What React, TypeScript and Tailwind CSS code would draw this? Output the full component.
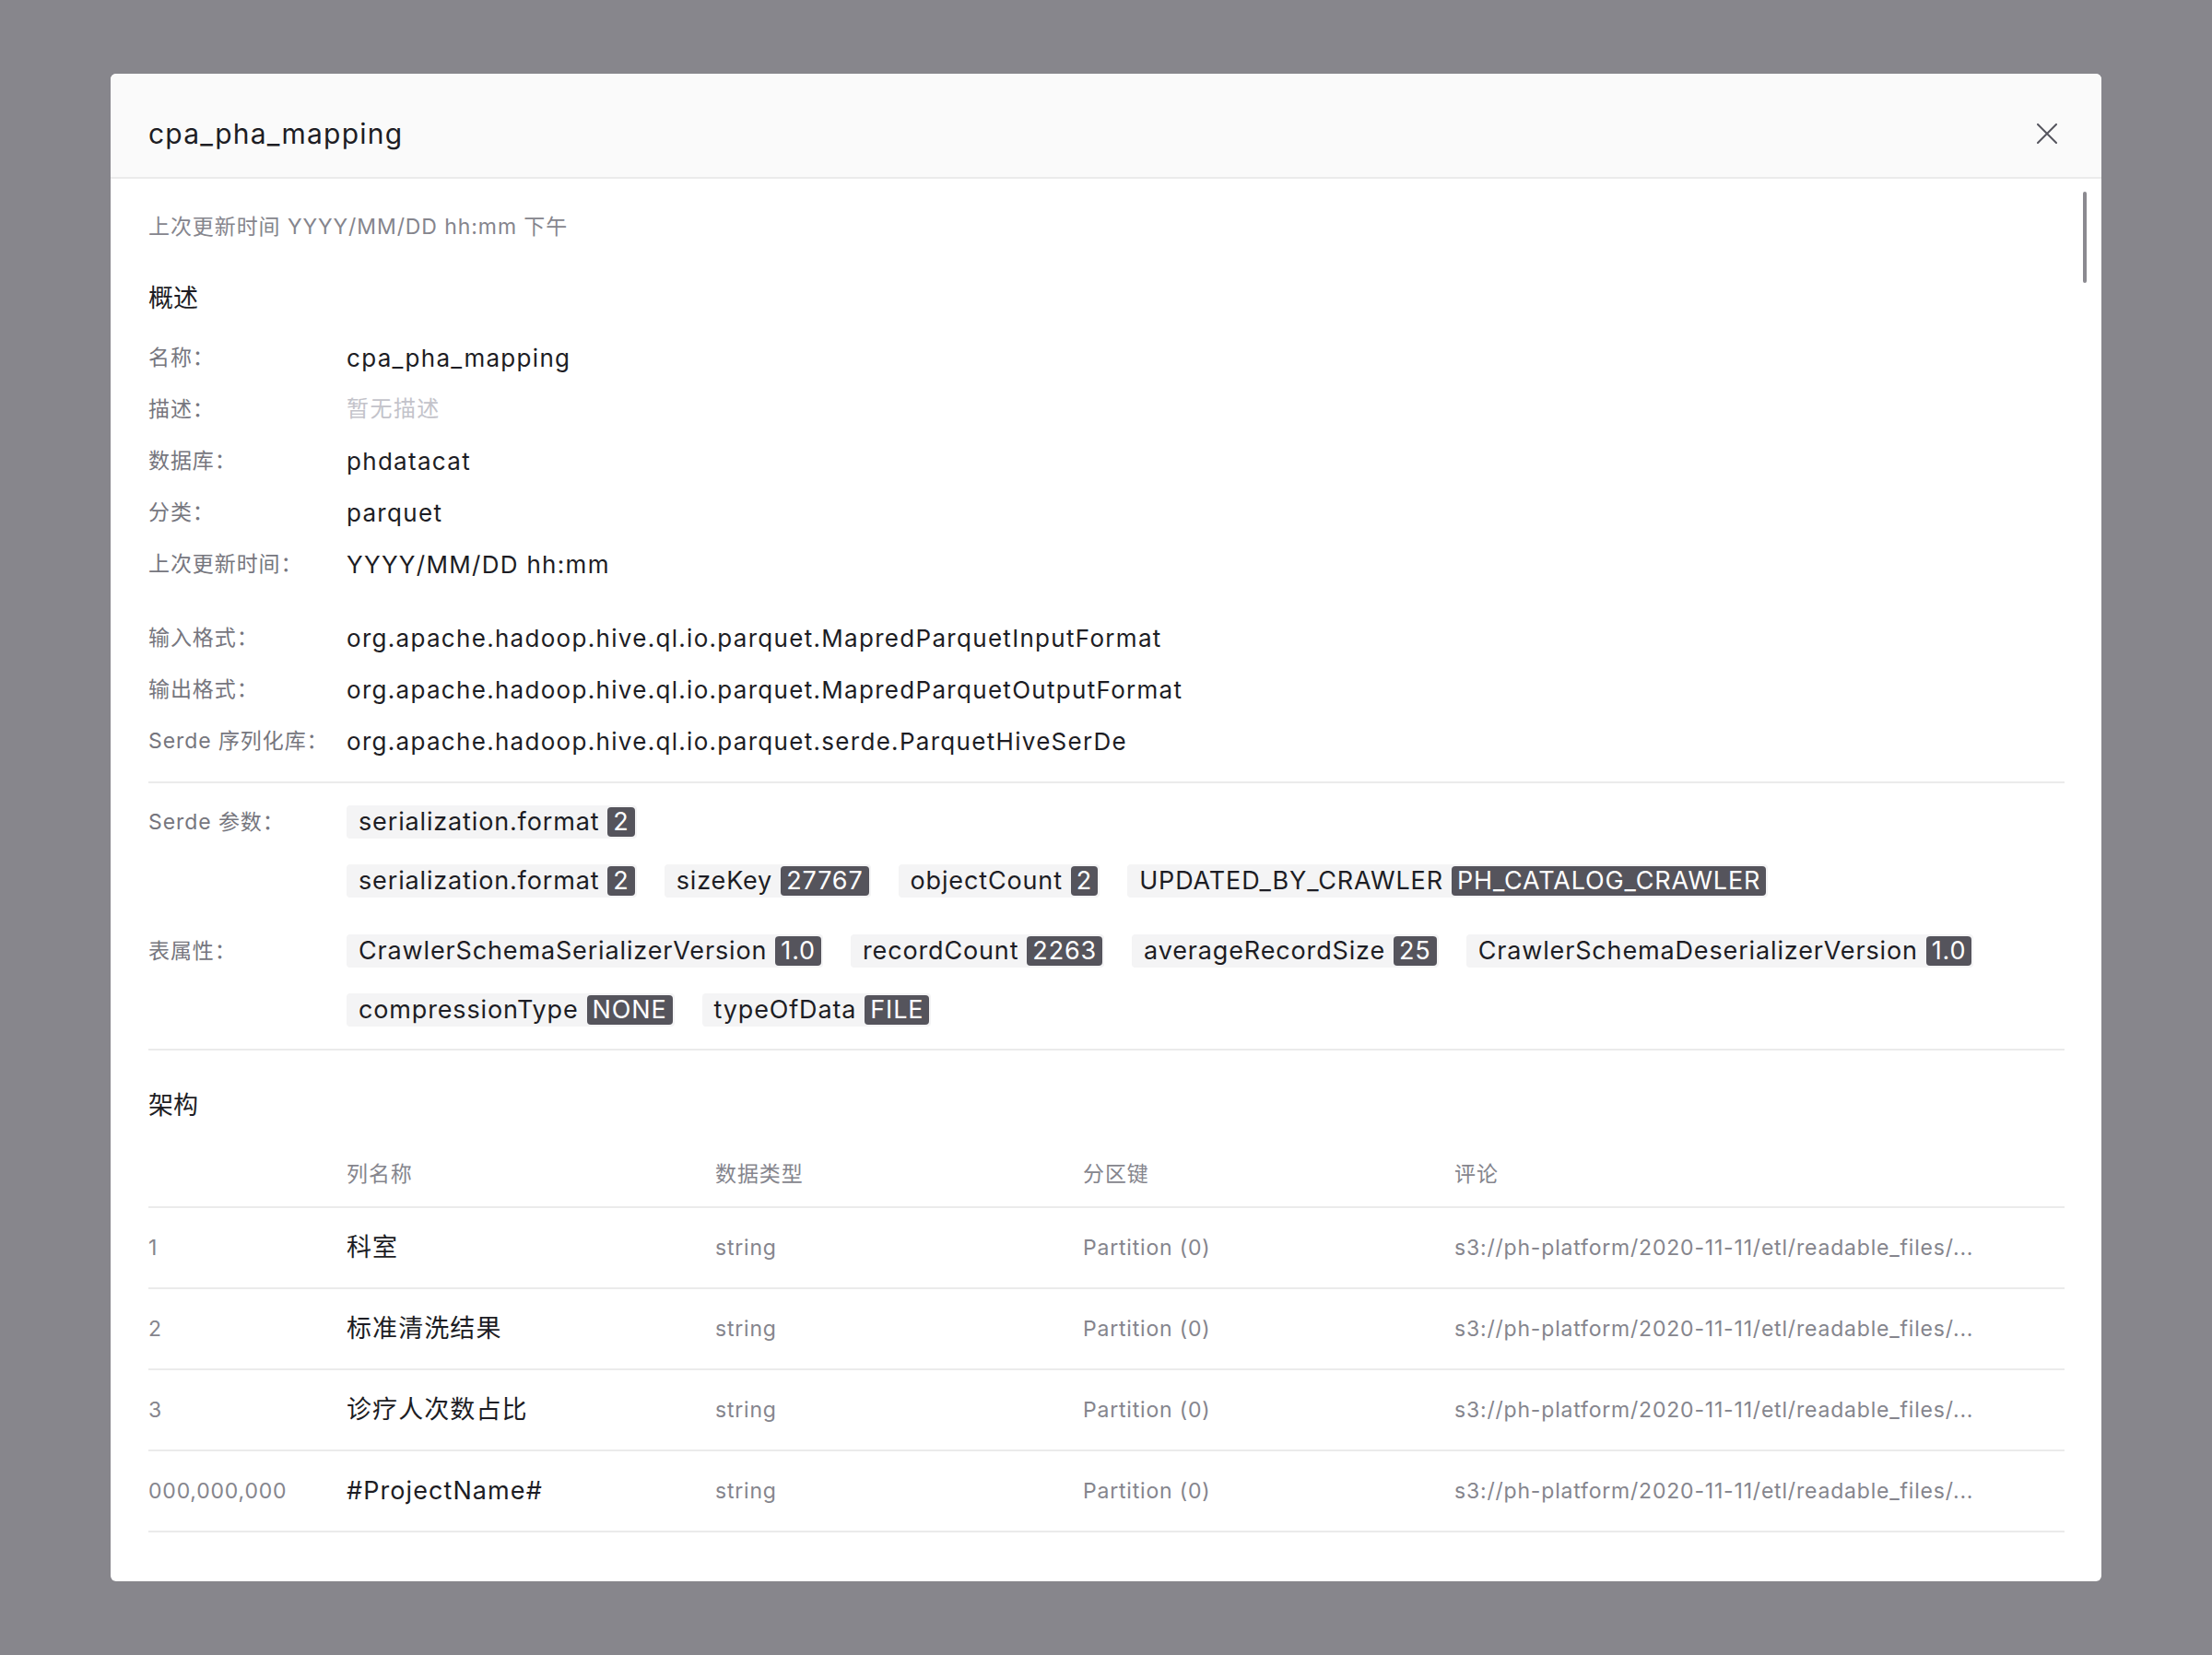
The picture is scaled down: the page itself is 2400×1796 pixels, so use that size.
import React from 'react';

type Row = { label: string; value: string; muted?: boolean };

const overview: Row[] = [
    { label: '名称：', value: 'cpa_pha_mapping' },
    { label: '描述：', value: '暂无描述', muted: true },
    { label: '数据库：', value: 'phdatacat' },
    { label: '分类：', value: 'parquet' },
    { label: '上次更新时间：', value: 'YYYY/MM/DD hh:mm' },
];

const formats: Row[] = [
    { label: '输入格式：', value: 'org.apache.hadoop.hive.ql.io.parquet.MapredParquetInputFormat' },
    { label: '输出格式：', value: 'org.apache.hadoop.hive.ql.io.parquet.MapredParquetOutputFormat' },
    { label: 'Serde 序列化库：', value: 'org.apache.hadoop.hive.ql.io.parquet.serde.ParquetHiveSerDe' },
];

const serdeParams: [string, string][] = [
    ['serialization.format', '2'],
    ['sizeKey', '27767'],
    ['objectCount', '2'],
    ['UPDATED_BY_CRAWLER', 'PH_CATALOG_CRAWLER'],
];

const tableProps: [string, string][] = [
    ['CrawlerSchemaSerializerVersion', '1.0'],
    ['recordCount', '2263'],
    ['averageRecordSize', '25'],
    ['CrawlerSchemaDeserializerVersion', '1.0'],
    ['compressionType', 'NONE'],
    ['typeOfData', 'FILE'],
];

const columns = [
    { idx: '1', name: '科室' },
    { idx: '2', name: '标准清洗结果' },
    { idx: '3', name: '诊疗人次数占比' },
    { idx: '000,000,000', name: '#ProjectName#' },
];

function Tag({ name, value }: { name: string; value: string }) {
    return (
        <span className="inline-flex items-center h-[36px] bg-[#f4f4f5] rounded-[4px] pl-[13px] pr-[2px] text-[27px] tracking-[0.85px] text-[#1d1d24]">
            {name}
            <span className="ml-[9px] h-[32px] px-[6px] rounded-[4px] bg-[#55545c] text-white flex items-center">
                {value}
            </span>
        </span>
    );
}

function InfoRow({ row }: { row: Row }) {
    return (
        <div className="flex items-center h-[56px]">
            <div className="w-[215px] shrink-0 text-[23px] tracking-[0.04em] text-[#76767e]">{row.label}</div>
            <div
                className={
                    row.muted
                        ? 'text-[24px] tracking-[0.06em] text-[#c3c3ca]'
                        : 'text-[26px] tracking-[1.3px] text-[#1d1d24]'
                }
            >
                {row.value}
            </div>
        </div>
    );
}

export default function App() {
    return (
        <div className="w-[2400px] h-[1796px] bg-[#87868c] pt-[80px] pl-[120px] font-['Inter','Noto_Sans_CJK_SC',sans-serif]">
            <div className="w-[2160px] h-[1636px] bg-white rounded-[6px] overflow-hidden flex flex-col">
                <header className="h-[114px] shrink-0 bg-[#fafafa] border-b-2 border-[#ebebeb] flex items-center justify-between pt-[18px] pl-[41px] pr-[48px]">
                    <h1 className="text-[30px] tracking-[0.04em] text-[#1d1d24]">cpa_pha_mapping</h1>
                    <button className="w-[22px] h-[22px] text-[#55555e]">
                        <svg width="22" height="22" viewBox="0 0 22 22" fill="none">
                            <path d="M1 1L21 21M21 1L1 21" stroke="currentColor" strokeWidth="2" strokeLinecap="round" />
                        </svg>
                    </button>
                </header>

                <div className="relative flex-1 overflow-hidden pl-[41px] pr-[40px]">
                    <div className="absolute right-[16px] top-[14px] w-[4px] h-[99px] rounded-full bg-[#8b8a90]" />

                    <p className="mt-[36px] h-[32px] leading-[32px] text-[23px] tracking-[0.04em] text-[#85858d]">
                        上次更新时间 YYYY/MM/DD hh:mm 下午
                    </p>

                    <h2 className="mt-[44px] h-[36px] leading-[36px] text-[27px] text-[#1d1d24]">概述</h2>

                    <div className="mt-[18px]">
                        {overview.map((r) => (
                            <InfoRow key={r.label} row={r} />
                        ))}
                    </div>
                    <div className="mt-[24px]">
                        {formats.map((r) => (
                            <InfoRow key={r.label} row={r} />
                        ))}
                    </div>

                    <div className="mt-[16px] h-[2px] bg-[#ebebeb]" />

                    <div className="mt-[24px] flex items-start">
                        <div className="w-[215px] shrink-0 h-[36px] flex items-center text-[23px] tracking-[0.04em] text-[#76767e]">
                            Serde 参数：
                        </div>
                        <Tag name="serialization.format" value="2" />
                    </div>
                    <div className="mt-[28px] flex items-start">
                        <div className="w-[215px] shrink-0" />
                        <div className="flex flex-wrap gap-x-[30px] gap-y-[28px]">
                            {serdeParams.map(([k, v]) => (
                                <Tag key={k} name={k} value={v} />
                            ))}
                        </div>
                    </div>

                    <div className="mt-[40px] flex items-start">
                        <div className="w-[215px] shrink-0 h-[36px] flex items-center text-[23px] tracking-[0.04em] text-[#76767e]">
                            表属性：
                        </div>
                        <div className="flex flex-wrap gap-x-[30px] gap-y-[28px] w-[1830px]">
                            {tableProps.map(([k, v]) => (
                                <Tag key={k} name={k} value={v} />
                            ))}
                        </div>
                    </div>

                    <div className="mt-[24px] h-[2px] bg-[#ebebeb]" />

                    <h2 className="mt-[42px] h-[36px] leading-[36px] text-[27px] text-[#1d1d24]">架构</h2>

                    <div className="mt-[22px]">
                        <div className="grid grid-cols-[215px_400px_399px_403px_1fr] items-center h-[71px] border-b-2 border-[#ebebeb] text-[23px] tracking-[0.04em] text-[#85858d]">
                            <div />
                            <div>列名称</div>
                            <div>数据类型</div>
                            <div>分区键</div>
                            <div>评论</div>
                        </div>
                        {columns.map((c) => (
                            <div
                                key={c.idx}
                                className="grid grid-cols-[215px_400px_399px_403px_1fr] items-center h-[88px] border-b-2 border-[#ebebeb] text-[23px] tracking-[0.035em] text-[#85858d]"
                            >
                                <div>{c.idx}</div>
                                <div className="text-[27px] tracking-[0.04em] text-[#1d1d24]">{c.name}</div>
                                <div>string</div>
                                <div>Partition (0)</div>
                                <div>s3://ph-platform/2020-11-11/etl/readable_files/...</div>
                            </div>
                        ))}
                    </div>
                </div>
            </div>
        </div>
    );
}
